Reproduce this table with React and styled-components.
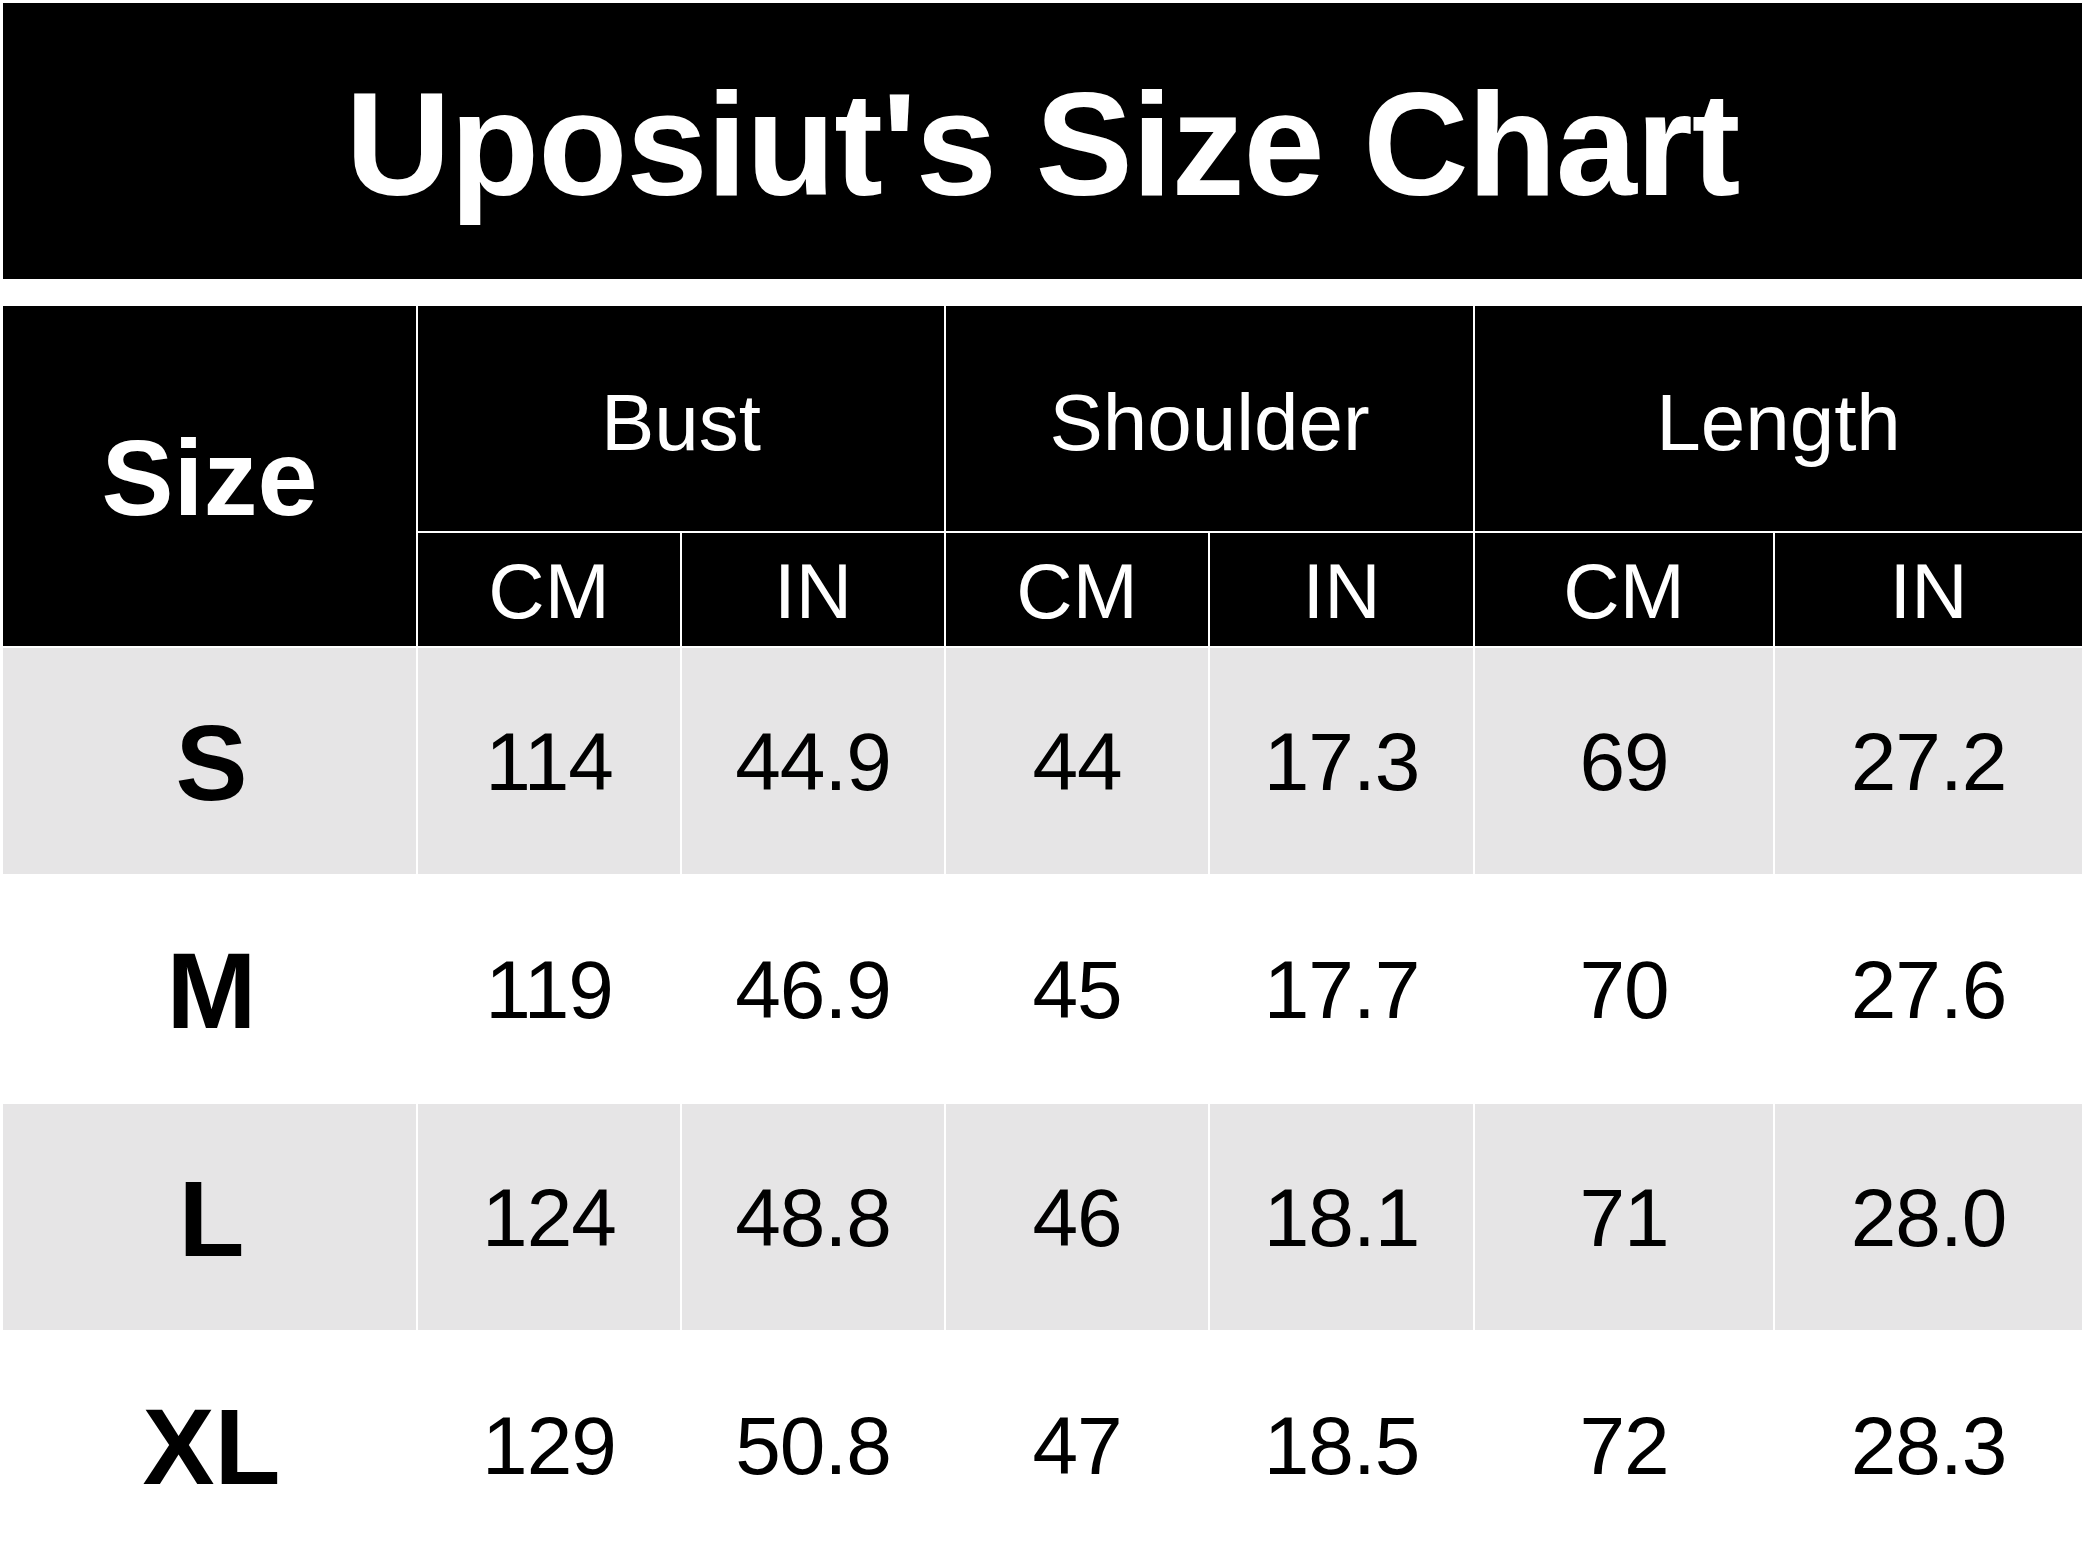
import React from 'react';
import styled, { createGlobalStyle } from 'styled-components';

/* Reset halaman: tanpa margin, font sans seperti Helvetica */
const GlobalStyle = createGlobalStyle`
  html, body {
    margin: 0;
    padding: 0;
    background: #fff;
  }
  body {
    font-family: "Liberation Sans", Arial, sans-serif;
  }
`;

const Page = styled.div`
  width: 2084px;
  padding: 3px 2px 0 3px;
  box-sizing: border-box;
  background: #fff;
`;

/* Judul besar di pita hitam */
const TitleBar = styled.header`
  height: 276px;
  background: #000;
  display: flex;
  align-items: center;
  justify-content: center;
`;

const Title = styled.h1`
  margin: 0;
  color: #fff;
  font-size: 146px;
  font-weight: 700;
  letter-spacing: -1px;
  line-height: 1;
  transform: translateY(4px);
`;

/* Tabel ukuran memakai grid, garis putih dari gap */
const Chart = styled.div`
  margin-top: 27px;
  display: grid;
  grid-template-columns: 413px 262px 262px 262px 263px 298px 307px;
  grid-template-rows: 225px 113px repeat(4, 226px);
  gap: 2px;
  background: #fff;
`;

const Cell = styled.div`
  display: flex;
  align-items: center;
  justify-content: center;
  line-height: 1;
  white-space: nowrap;
`;

const SizeHead = styled(Cell)`
  grid-row: span 2;
  background: #000;
  color: #fff;
  font-size: 108px;
  font-weight: 700;
  padding-top: 4px;
`;

const GroupHead = styled(Cell)`
  grid-column: span 2;
  background: #000;
  color: #fff;
  font-size: 80px;
  padding-top: 8px;
`;

const UnitHead = styled(Cell)`
  background: #000;
  color: #fff;
  font-size: 78px;
  padding-top: 2px;
`;

const SizeCell = styled(Cell)`
  background: ${(p) => (p.$shade ? '#e6e5e6' : '#fff')};
  color: #000;
  font-size: 108px;
  font-weight: 700;
  padding-top: 4px;
  padding-left: 4px;
`;

const ValueCell = styled(Cell)`
  background: ${(p) => (p.$shade ? '#e6e5e6' : '#fff')};
  color: #000;
  font-size: 82px;
  letter-spacing: -1px;
  padding-top: 2px;
`;

const groups = ['Bust', 'Shoulder', 'Length'];

const rows = [
  { size: 'S', values: ['114', '44.9', '44', '17.3', '69', '27.2'] },
  { size: 'M', values: ['119', '46.9', '45', '17.7', '70', '27.6'] },
  { size: 'L', values: ['124', '48.8', '46', '18.1', '71', '28.0'] },
  { size: 'XL', values: ['129', '50.8', '47', '18.5', '72', '28.3'] },
];

const App = () => {
  return (
    <Page>
      <GlobalStyle />
      <TitleBar>
        <Title>Uposiut's Size Chart</Title>
      </TitleBar>
      <Chart>
        <SizeHead>Size</SizeHead>
        {groups.map((g) => (
          <GroupHead key={g}>{g}</GroupHead>
        ))}
        {groups.map((g) => (
          <React.Fragment key={g}>
            <UnitHead>CM</UnitHead>
            <UnitHead>IN</UnitHead>
          </React.Fragment>
        ))}
        {rows.map((r, i) => (
          <React.Fragment key={r.size}>
            <SizeCell $shade={i % 2 === 0}>{r.size}</SizeCell>
            {r.values.map((v, j) => (
              <ValueCell key={j} $shade={i % 2 === 0}>
                {v}
              </ValueCell>
            ))}
          </React.Fragment>
        ))}
      </Chart>
    </Page>
  );
};

export default App;
